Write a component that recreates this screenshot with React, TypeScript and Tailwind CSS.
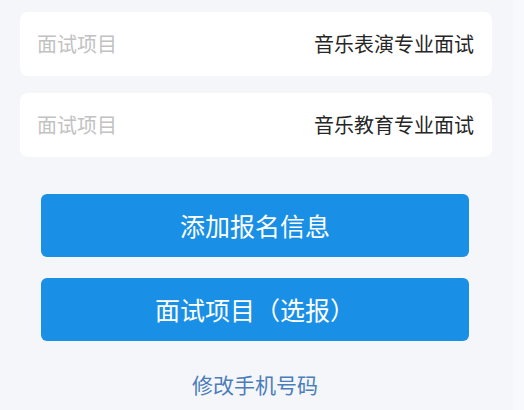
const items = [
  { label: "面试项目", value: "音乐表演专业面试" },
  { label: "面试项目", value: "音乐教育专业面试" },
];

export default function App() {
  return (
    <div
      className="w-[524px] h-[410px] overflow-hidden flex bg-[#f8f9fc]"
      style={{ fontFamily: '"Noto Sans CJK SC", "Noto Sans", sans-serif' }}
    >
      <div className="w-[513px] bg-[#f4f6fa] pt-3">
        {/* Info rows */}
        <div className="flex flex-col gap-[17px] pl-5 w-[492px]">
          {items.map((item, i) => (
            <div
              key={i}
              className="h-16 bg-white rounded-lg flex items-center justify-between pl-[17px] pr-[18px]"
            >
              <span className="text-[20px] text-[#c2c2c2]">{item.label}</span>
              <span className="text-[20px] text-[#262626]">{item.value}</span>
            </div>
          ))}
        </div>

        {/* Actions */}
        <div className="flex flex-col gap-[21px] pl-[41px] w-[469px] mt-[37px]">
          <button className="h-[63px] rounded-md bg-[#1a8fe6] text-white text-[25px]">
            添加报名信息
          </button>
          <button className="h-[63px] rounded-md bg-[#1a8fe6] text-white text-[25px]">
            面试项目（选报）
          </button>
        </div>

        <div className="flex justify-center mt-[28px] pr-[3px]">
          <span className="text-[21px] text-[#4b7dbb]">修改手机号码</span>
        </div>
      </div>
    </div>
  );
}
